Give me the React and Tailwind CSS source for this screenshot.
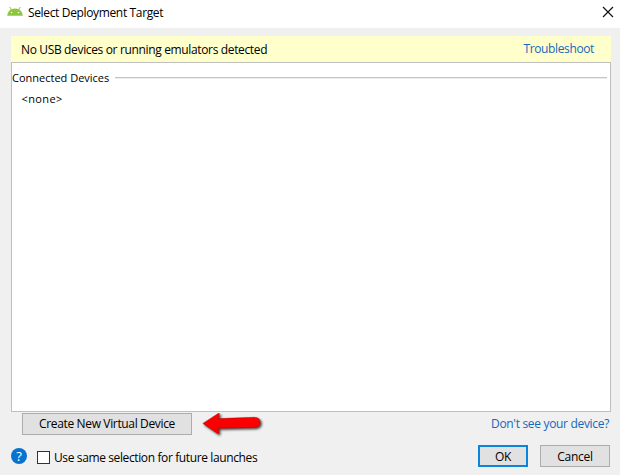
function AndroidIcon() {
  return (
    <svg width="16" height="12" viewBox="0 0 16 12" className="shrink-0">
      <path d="M4.6 5L2.6 2M11.4 5L13.4 2" stroke="#a0cd63" strokeWidth="1.1" fill="none" />
      <path d="M0.2 10.8C0.6 6.4 3.7 3.6 8 3.6s7.4 2.8 7.8 7.2z" fill="#8cc63f" />
      <circle cx="4.5" cy="7.5" r="0.8" fill="#f4faeb" />
      <circle cx="11.5" cy="7.5" r="0.8" fill="#f4faeb" />
    </svg>
  );
}

function CloseIcon() {
  return (
    <svg width="12" height="12" viewBox="0 0 12 12" className="shrink-0">
      <path d="M1 1L11 11M11 1L1 11" stroke="#111" strokeWidth="1.15" />
    </svg>
  );
}

function Arrow() {
  return (
    <svg width="68" height="28" viewBox="0 0 68 28" className="shrink-0">
      <defs>
        <filter id="arrow-shadow" x="-20%" y="-30%" width="150%" height="180%">
          <feDropShadow dx="1.5" dy="1.5" stdDeviation="1.1" floodColor="#000" floodOpacity="0.75" />
        </filter>
      </defs>
      <path
        d="M1.8 10.4L17.2 0.4Q18.7 0 18.5 1.4L17.4 5.6L53.5 4.3Q59 4.5 59.2 9.3Q59 14 53.5 14.5L17.2 15.2L18 20Q17.8 21.2 16.5 20.6Z"
        fill="#fb0404"
        stroke="#8c1010"
        strokeWidth="0.4"
        filter="url(#arrow-shadow)"
      />
    </svg>
  );
}

export default function App() {
  return (
    <div className="flex h-[475px] w-[620px] flex-col overflow-hidden bg-[#f0f0f0] font-['Open_Sans','Noto_Sans',sans-serif] text-[12px] leading-4 whitespace-nowrap text-black">
      <header className="flex h-7 shrink-0 items-start bg-white pr-1.5 pl-[7px]">
        <div className="pt-[5px]"><AndroidIcon /></div>
        <h1 className="ml-[5px] pt-[5px] tracking-[-0.35px]">Select Deployment Target</h1>
        <button className="mt-1.5 ml-auto"><CloseIcon /></button>
      </header>
      <main className="mx-[11px] mt-2 w-[600px]">
        <div className="flex h-[26px] items-start justify-between bg-[#ffffcc] pr-[17px] pl-[10px]">
          <span className="pt-[6px] tracking-[-0.35px]">No USB devices or running emulators detected</span>
          <a className="pt-[5px] tracking-[-0.37px] text-[#1468bd]">Troubleshoot</a>
        </div>
        <section className="h-[350px] border border-[#bfbfbf] bg-white">
          <div className="flex h-[29px] items-start pr-[3px]">
            <h2 className="pt-[8px] text-[11px] leading-[14px]">Connected Devices</h2>
            <div className="mt-[14px] ml-auto h-[2px] w-[492px] border-b border-[#ececec] bg-[#c6c6c6] bg-clip-padding" />
          </div>
          <div className="pl-[9.5px] text-[11px] leading-[14px] tracking-[0.4px]">&lt;none&gt;</div>
        </section>
        <div className="flex h-[33px] items-start pt-px pl-[11px]">
          <button className="flex h-[22px] w-[170px] items-center justify-center border border-[#adadad] bg-[#e1e1e1] tracking-[-0.35px]">Create New Virtual Device</button>
          <div className="ml-[9px]"><Arrow /></div>
          <a className="mt-[3px] ml-auto pr-[2px] tracking-[-0.32px] text-[#1468bd]">Don't see your device?</a>
        </div>
      </main>
      <footer className="flex items-start pr-[10px] pl-[11px]">
        <div className="mt-[3px] flex size-4 items-center justify-center rounded-full bg-[#0872cf] text-[13px] font-medium text-white">?</div>
        <div className="mt-[6px] ml-[10px] size-[13px] border border-[#333] bg-white" />
        <label className="ml-1 pt-[5px] tracking-[-0.38px]">Use same selection for future launches</label>
        <button className="ml-auto flex h-[22px] w-[50px] items-center justify-center border-2 border-[#0a84dc] bg-[#e1e1e1] pt-px tracking-[-0.3px]">OK</button>
        <button className="ml-3 flex h-[22px] w-[70px] items-center justify-center border border-[#adadad] bg-[#e1e1e1] pt-px tracking-[-0.3px]">Cancel</button>
      </footer>
    </div>
  );
}
